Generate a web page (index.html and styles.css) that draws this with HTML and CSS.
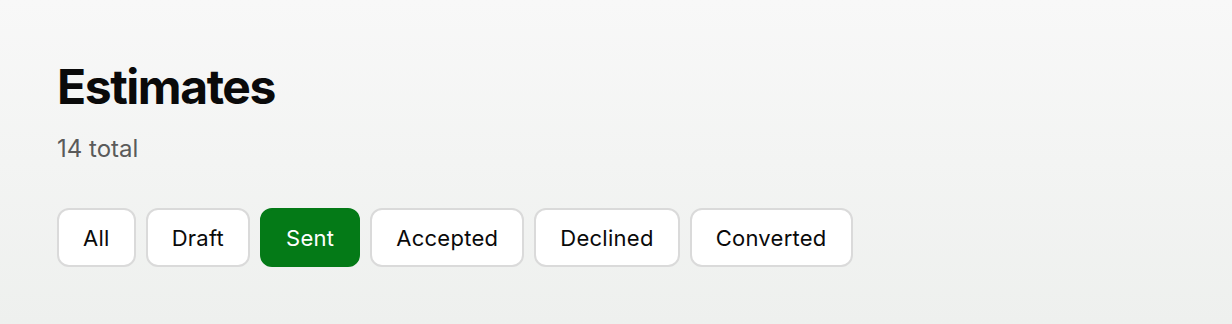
FILE: index.html
```html
<!DOCTYPE html>
<html lang="en">
<head>
    <meta charset="UTF-8">
    <meta name="viewport" content="width=device-width, initial-scale=1.0">
    <title>Estimates</title>
    <link rel="stylesheet" href="styles.css">
</head>
<body>
    <main class="page">
        <header class="page-header">
            <h1>Estimates</h1>
            <p class="count">14 total</p>
        </header>

        <nav class="filters">
            <button class="filter">All</button>
            <button class="filter">Draft</button>
            <button class="filter active">Sent</button>
            <button class="filter">Accepted</button>
            <button class="filter">Declined</button>
            <button class="filter">Converted</button>
        </nav>
    </main>
</body>
</html>
```

FILE: styles.css
```css
html, body {
    margin: 0;
    height: 100%;
}

body {
    background: linear-gradient(to bottom, #f8f8f8, #eef0ee);
    font-family: Inter, "Noto Sans", sans-serif;
    color: #0a0a0a;
}

.page {
    padding: 56px 57px;
}

.page-header h1 {
    margin: 0;
    font-size: 48px;
    font-weight: 700;
    letter-spacing: -0.03em;
    line-height: 62px;
}

.count {
    margin: 16px 0 0;
    font-size: 24px;
    color: #5a5a5a;
    line-height: 30px;
}

.filters {
    display: flex;
    gap: 10px;
    margin-top: 44px;
}

.filter {
    height: 59px;
    padding: 0 24px;
    background-color: #fff;
    border: 2px solid #dadada;
    border-radius: 12px;
    font-family: inherit;
    font-size: 22px;
    letter-spacing: 0.012em;
    color: #0a0a0a;
    cursor: pointer;
}

.filter.active {
    background-color: #047a17;
    border-color: #047a17;
    color: #fff;
}
```
